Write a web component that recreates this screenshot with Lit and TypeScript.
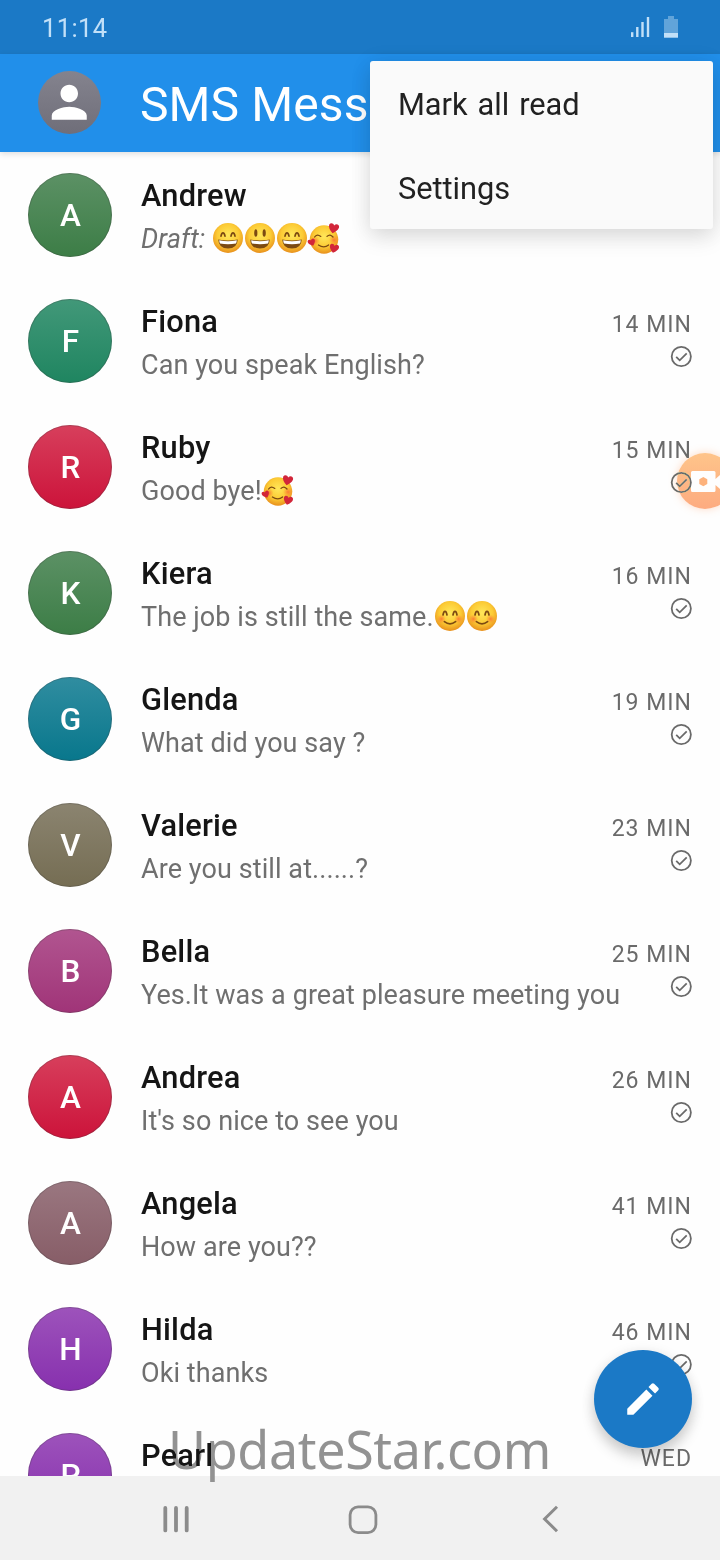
import { LitElement, html, css, svg, nothing } from "lit";
import { customElement, property } from "lit/decorators.js";

type Mood = "grin" | "open" | "hearts" | "blush";
interface Chat {
  name: string;
  text: string;
  moods?: Mood[];
  draft?: boolean;
  time?: string;
  top: string;
  bottom: string;
}

const chats: Chat[] = [
  { name: "Andrew", text: "Draft: ", moods: ["grin", "open", "grin", "hearts"], draft: true, top: "#5c9165", bottom: "#3c7d46" },
  { name: "Fiona", text: "Can you speak English?", time: "14 MIN", top: "#429879", bottom: "#1f8560" },
  { name: "Ruby", text: "Good bye!", moods: ["hearts"], time: "15 MIN", top: "#d73f5c", bottom: "#cc133a" },
  { name: "Kiera", text: "The job is still the same.", moods: ["blush", "blush"], time: "16 MIN", top: "#5c9165", bottom: "#3c7d46" },
  { name: "Glenda", text: "What did you say ?", time: "19 MIN", top: "#308da0", bottom: "#08778c" },
  { name: "Valerie", text: "Are you still at......?", time: "23 MIN", top: "#8b8470", bottom: "#756d53" },
  { name: "Bella", text: "Yes.It was a great pleasure meeting you", time: "25 MIN", top: "#b15590", bottom: "#a03478" },
  { name: "Andrea", text: "It's so nice to see you", time: "26 MIN", top: "#d73f5c", bottom: "#cc133a" },
  { name: "Angela", text: "How are you??", time: "41 MIN", top: "#9a7780", bottom: "#875d67" },
  { name: "Hilda", text: "Oki thanks", time: "46 MIN", top: "#9d53bb", bottom: "#8730ae" },
  { name: "Pearl", text: "", time: "WED", top: "#9d53bb", bottom: "#8730ae" },
];

@customElement("mood-face")
export class MoodFace extends LitElement {
  @property() mood: Mood = "grin";
  static styles = css`
    :host { display: inline-block; width: 32px; height: 32px; margin: -4px 0; vertical-align: -2px; }
    svg { display: block; overflow: visible; }
  `;
  render() {
    const heart = (x: number, y: number, s: number, r: number) => svg`
      <path transform="translate(${x} ${y}) rotate(${r}) scale(${s})" fill="#d2263a"
        d="M0 4.4C-3 2.4-5-.2-4.6-2.4-4.2-4.6-1.2-5 0-2.6 1.2-5 4.2-4.6 4.6-2.4 5-.2 3 2.4 0 4.4z"></path>`;
    const m = this.mood;
    return html`<svg width="32" height="32" viewBox="0 0 32 32">
      <defs>
        <radialGradient id="g" cx=".5" cy=".4" r=".6">
          <stop offset="0" stop-color="#ffe75a"></stop>
          <stop offset=".6" stop-color="#fccb35"></stop>
          <stop offset="1" stop-color="#e8901c"></stop>
        </radialGradient>
        <radialGradient id="c"><stop offset="0" stop-color="#fb6a35" stop-opacity=".8"></stop>
          <stop offset="1" stop-color="#fb8a35" stop-opacity="0"></stop></radialGradient>
      </defs>
      <circle cx="16" cy=${m === "hearts" ? 17.5 : 16} r=${m === "hearts" ? 14.2 : 15} fill="url(#g)"></circle>
      ${m === "grin" || m === "open"
        ? svg`<path fill="#7c4a12" d="M6.2 17.4Q16 19.6 25.8 17.4Q25.3 26.4 16 26.6Q6.7 26.4 6.2 17.4z"></path>
            <path fill="#fff" d="M7.2 18.2Q16 20.2 24.8 18.2Q24.7 20.2 24 21.4Q16 23 8 21.4Q7.3 20.2 7.2 18.2z"></path>`
        : nothing}
      ${m === "grin"
        ? svg`<path fill="none" stroke="#7c4a12" stroke-width="1.7" stroke-linecap="round" d="M9 14.2Q9.6 10.8 11 10.8T13 14.2M19 14.2Q19.6 10.8 21 10.8T23 14.2"></path>`
        : nothing}
      ${m === "open"
        ? svg`<ellipse cx="11.8" cy="11" rx="1.6" ry="3.8" fill="#7c4a12"></ellipse><ellipse cx="20.2" cy="11" rx="1.6" ry="3.8" fill="#7c4a12"></ellipse>`
        : nothing}
      ${m === "blush"
        ? svg`<circle cx="7.4" cy="19" r="4.6" fill="url(#c)"></circle><circle cx="24.6" cy="19" r="4.6" fill="url(#c)"></circle>
            <path fill="none" stroke="#7c4a12" stroke-width="1.7" stroke-linecap="round" d="M9 15Q9.6 11.4 11 11.4T13 15M19 15Q19.6 11.4 21 11.4T23 15M10.4 21.6Q16 26 21.6 21.6"></path>`
        : nothing}
      ${m === "hearts"
        ? svg`<circle cx="7" cy="19" r="4.6" fill="url(#c)"></circle><circle cx="26" cy="18" r="5" fill="url(#c)"></circle>
            <path fill="none" stroke="#7c4a12" stroke-width="1.3" stroke-linecap="round" d="M6.6 15Q9 11.4 12.8 14.4M19 14.4Q22 11.4 25 15M10.4 23Q16 26.8 20.6 23"></path>
            ${heart(25.6, 6.4, 1.1, 12)}${heart(3.8, 20.4, 0.8, -22)}${heart(26, 26.4, 1, 14)}`
        : nothing}
    </svg>`;
  }
}

@customElement("chat-row")
export class ChatRow extends LitElement {
  @property({ attribute: false }) chat!: Chat;
  static styles = css`
    :host { display: flex; height: 126px; box-sizing: border-box; padding: 0 28px; flex: none; }
    .avatar {
      width: 84px; height: 84px; margin-top: 21px; border-radius: 50%; flex: none; box-sizing: border-box;
      display: flex; align-items: center; justify-content: center; padding: 1px 0 0 1px;
      box-shadow: inset 0 0 0 1px rgba(60, 60, 60, 0.28);
      color: #fff; font-weight: 500; font-size: 31.5px; line-height: 84px;
    }
    .body { flex: 1; min-width: 0; padding: 26px 0 0 29px; }
    .name { font-weight: 500; font-size: 30.8px; line-height: 36px; letter-spacing: 0.2px; color: #151515; }
    .text {
      margin-top: 9px; height: 32px; font-size: 27px; line-height: 32px; letter-spacing: 0.08px;
      color: #6f6f6f; white-space: pre;
    }
    .draft { font-style: italic; }
    .meta { display: flex; flex-direction: column; align-items: flex-end; padding-top: 33px; flex: none; }
    .time { font-size: 23px; line-height: 28px; letter-spacing: 1px; color: #6a6a6a; white-space: nowrap; }
    .check { display: block; margin-top: 6.5px; }
  `;
  render() {
    const c = this.chat;
    return html`
      <div class="avatar" style="background:linear-gradient(${c.top},${c.bottom})">${c.name[0]}</div>
      <div class="body">
        <div class="name">${c.name}</div>
        <div class="text"><span class=${c.draft ? "draft" : ""}>${c.text}</span>${c.moods?.map((m) => html`<mood-face .mood=${m}></mood-face>`)}</div>
      </div>
      ${c.time
        ? html`<div class="meta">
            <div class="time">${c.time}</div>
            <svg class="check" width="22" height="22" viewBox="0 0 22 22" fill="none" stroke="#6a6a6a" stroke-width="1.8">
              <circle cx="11.3" cy="10.5" r="9.6"></circle><path d="M6.2 10.8l3.5 3.5 7-7"></path>
            </svg>
          </div>`
        : nothing}
    `;
  }
}

@customElement("app-root")
export class AppRoot extends LitElement {
  static styles = css`
    :host {
      display: flex; flex-direction: column; position: relative; width: 720px; height: 1560px; overflow: hidden;
      background: #fefefe; font-family: Roboto, "Liberation Sans", sans-serif;
    }
    .status {
      height: 54px; flex: none; box-sizing: border-box; padding: 0 41px 0 42px; background: #1b79c6;
      display: flex; align-items: center; justify-content: space-between;
    }
    .clock { font-size: 25.5px; line-height: 30px; letter-spacing: 0.4px; color: #c2e0f8; padding-top: 2px; }
    .signals { display: block; }
    .bar {
      height: 98px; flex: none; box-sizing: border-box; padding-left: 38px; background: #218fea; z-index: 1;
      display: flex; align-items: center; box-shadow: 0 2px 6px rgba(0, 0, 0, 0.13);
    }
    .account {
      width: 63px; height: 63px; border-radius: 50%; background: linear-gradient(#84838e, #6f6e79); margin-bottom: 1px;
      display: flex; align-items: center; justify-content: center;
    }
    .title { margin-left: 39px; font-size: 48px; line-height: 60px; letter-spacing: 0.1px; color: #fff; padding-top: 4px; }
    .list { flex: 1; min-height: 0; overflow: hidden; display: flex; flex-direction: column; }
    .nav { height: 84px; flex: none; background: #f1f1f1; display: flex; justify-content: center; align-items: center; }
    .key { width: 187.3px; display: flex; justify-content: center; }
    .keys { display: flex; margin-left: 6px; padding-top: 3px; }
    .menu {
      position: absolute; z-index: 3; left: 370px; top: 61px; width: 343px; height: 168px; box-sizing: border-box;
      border-radius: 3px; background: #fafafa; box-shadow: 0 10px 22px rgba(0, 0, 0, 0.09), 0 2px 22px rgba(0, 0, 0, 0.09);
    }
    .item { height: 84px; line-height: 87px; padding-left: 28px; font-size: 30.8px; letter-spacing: -0.05px; word-spacing: 2.5px; color: #212121; }
    .recorder {
      position: absolute; z-index: 2; left: 677px; top: 453px; width: 56px; height: 56px; border-radius: 50%;
      background: linear-gradient(#fec48a, #fdab80); box-shadow: 0 0 9px rgba(255, 150, 90, 0.35); mix-blend-mode: darken;
    }
    .fab {
      position: absolute; z-index: 2; left: 594px; top: 1350px; width: 98px; height: 98px; border-radius: 50%;
      background: #1b79c6; box-shadow: 0 9px 14px rgba(0, 0, 0, 0.16), 0 2px 14px rgba(0, 0, 0, 0.09);
      display: flex; align-items: center; justify-content: center;
      clip-path: inset(-30px -30px -28px -30px);
    }
    .mark {
      position: absolute; z-index: 2; left: 168px; top: 1413px; line-height: 72px; font-size: 52px; white-space: nowrap;
      letter-spacing: -0.35px;
      font-family: "Noto Sans", "Open Sans", sans-serif; color: #929292; mix-blend-mode: darken;
    }
  `;
  render() {
    return html`
      <div class="status">
        <span class="clock">11:14</span>
        <svg class="signals" width="48" height="22" viewBox="0 0 48 22">
          <g fill="#c2e0f8">
            <rect x="0" y="16.2" width="2.4" height="4.8"></rect><rect x="5.1" y="11" width="2.4" height="10"></rect>
            <rect x="10.3" y="6" width="2.4" height="15"></rect><rect x="15.8" y="1" width="2.4" height="20"></rect>
            <rect x="33" y="17" width="14" height="4.7"></rect>
          </g>
          <path fill="#61a4da" d="M33 3h4V0h6v3h4v14H33z"></path>
        </svg>
      </div>
      <div class="bar">
        <div class="account">
          <svg width="52.5" height="52.5" viewBox="0 0 24 24" fill="#fff">
            <path d="M12 12c2.21 0 4-1.79 4-4s-1.79-4-4-4-4 1.79-4 4 1.79 4 4 4zm0 2c-2.67 0-8 1.34-8 4v2h16v-2c0-2.66-5.33-4-8-4z"></path>
          </svg>
        </div>
        <div class="title">SMS Mess</div>
      </div>
      <div class="list">${chats.map((c) => html`<chat-row .chat=${c}></chat-row>`)}</div>
      <div class="nav">
        <div class="keys">
          <div class="key"><svg width="28" height="28" viewBox="0 0 28 28" stroke="#8b8b8b" stroke-width="3.8" stroke-linecap="round"><path d="M3.3 3v22.4M14 3v22.4M24.7 3v22.4"></path></svg></div>
          <div class="key"><svg width="30" height="30" viewBox="0 0 30 30" fill="none" stroke="#8b8b8b" stroke-width="2.8"><rect x="2.1" y="1.8" width="25.8" height="25.8" rx="8"></rect></svg></div>
          <div class="key"><svg width="28" height="28" viewBox="0 0 28 28" fill="none" stroke="#8b8b8b" stroke-width="3"><path d="M21 1.8L8.6 14 21 26.2"></path></svg></div>
        </div>
      </div>
      <div class="recorder">
        <svg width="43" height="56" viewBox="0 0 43 56">
          <path fill="#fff" d="M15.5 18H37q1.5 0 1.5 1.5V26l4.5-4v14l-4.5-4v5.5q0 1.5-1.5 1.5H15.5q-1.5 0-1.5-1.5v-18Q14 18 15.5 18z"></path>
          <path fill="#fdb27c" d="M26.3 24l4 2.3v4.6l-4 2.3-4-2.3v-4.6z"></path>
        </svg>
      </div>
      <div class="mark">UpdateStar.com</div>
      <div class="fab">
        <svg width="42" height="42" viewBox="0 0 24 24" fill="#fff">
          <path d="M3 17.5V21h3.5L17.4 10.1l-3.5-3.5zM20.71 7.04a1 1 0 0 0 0-1.41l-2.34-2.34a1 1 0 0 0-1.41 0l-1.83 1.83 3.75 3.75z"></path>
        </svg>
      </div>
      <div class="menu">
        <div class="item">Mark all read</div>
        <div class="item">Settings</div>
      </div>
    `;
  }
}
